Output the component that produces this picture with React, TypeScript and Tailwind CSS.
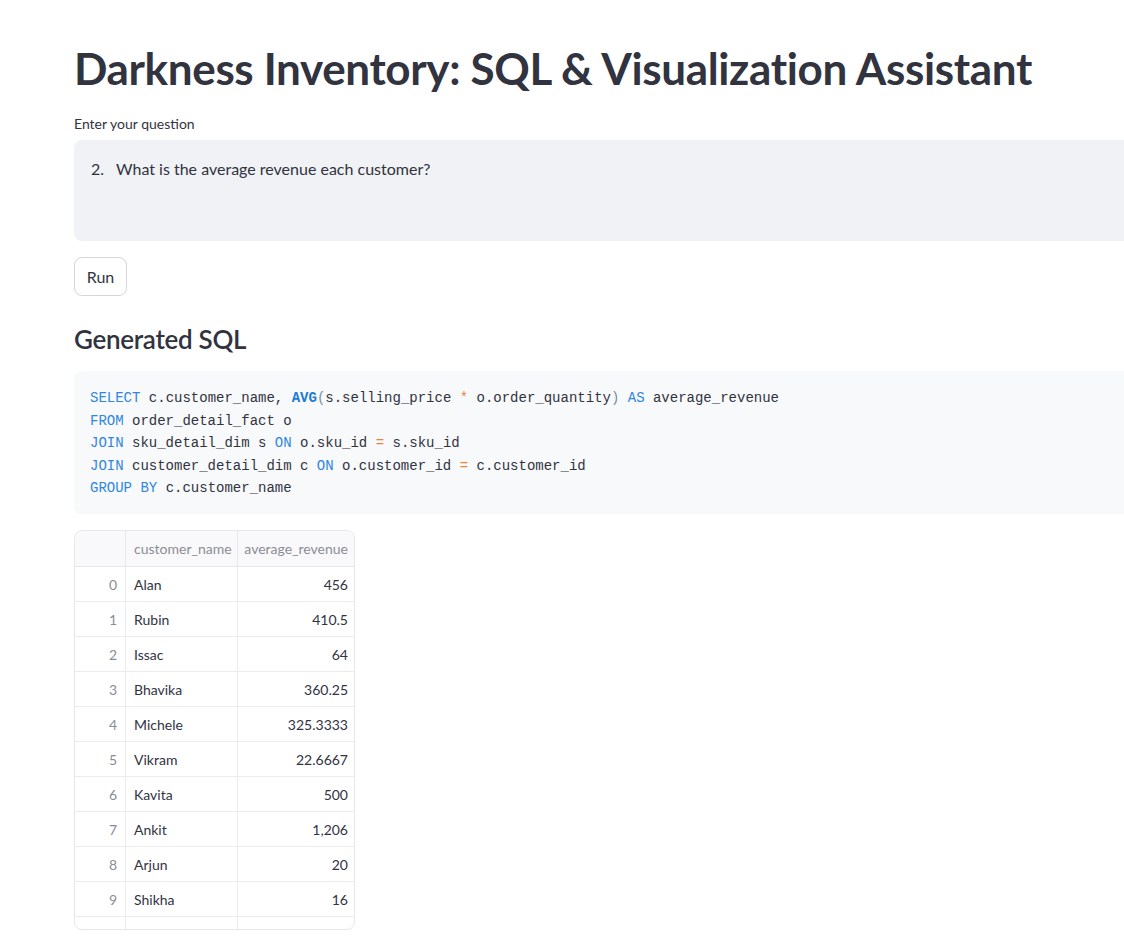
import React from 'react';

const rows: [number, string, string][] = [
  [0, 'Alan', '456'],
  [1, 'Rubin', '410.5'],
  [2, 'Issac', '64'],
  [3, 'Bhavika', '360.25'],
  [4, 'Michele', '325.3333'],
  [5, 'Vikram', '22.6667'],
  [6, 'Kavita', '500'],
  [7, 'Ankit', '1,206'],
  [8, 'Arjun', '20'],
  [9, 'Shikha', '16'],
  [10, '', ''],
];

const Kw = ({ children, bold }: { children: React.ReactNode; bold?: boolean }) => (
  <span className={bold ? 'text-[#1c7ad8] font-bold' : 'text-[#2f86e0]'}>{children}</span>
);
const Op = ({ children }: { children: React.ReactNode }) => (
  <span className="text-[#e8833a]">{children}</span>
);
const P = ({ children }: { children: React.ReactNode }) => (
  <span className="text-[#7d8da1]">{children}</span>
);

export default function App() {
  return (
    <div className="min-h-screen w-full overflow-hidden bg-white text-[#31333f] font-['Lato','Noto_Sans',sans-serif]">
      <div className="pl-[74px] w-[1200px] pt-[42px]">
        <h1 className="text-[44px] leading-[52px] font-bold tracking-[-0.35px] text-[#31333f]">
          Darkness Inventory: SQL &amp; Visualization Assistant
        </h1>

        <div className="mt-[21px] text-[14px] leading-[18px]">Enter your question</div>
        <div className="mt-[7px] h-[101px] rounded-l-[8px] bg-[#f0f2f6] px-[16px] pt-[18px] text-[16px] leading-[22px]">
          <span className="inline-block w-[26px] pl-[1px]">2.</span>
          What is the average revenue each customer?
        </div>

        <button className="mt-[16px] h-[39px] w-[53px] rounded-[8px] border border-[#d6d6d9] bg-white text-[16px] text-[#31333f]">
          Run
        </button>

        <h3 className="mt-[25px] text-[26px] leading-[36px] font-semibold tracking-[-0.3px]">Generated SQL</h3>

        <div className="mt-[14px] h-[143px] rounded-l-[8px] bg-[#f8f9fb] px-[16px] pt-[16px] font-['Liberation_Mono','DejaVu_Sans_Mono',monospace] text-[14px] leading-[22.5px] text-[#31333f] whitespace-pre">
          <div>
            <Kw>SELECT</Kw> c.customer_name, <Kw bold>AVG</Kw><P>(</P>s.selling_price <Op>*</Op> o.order_quantity<P>)</P> <Kw>AS</Kw> average_revenue
          </div>
          <div>
            <Kw>FROM</Kw> order_detail_fact o
          </div>
          <div>
            <Kw>JOIN</Kw> sku_detail_dim s <Kw>ON</Kw> o.sku_id <Op>=</Op> s.sku_id
          </div>
          <div>
            <Kw>JOIN</Kw> customer_detail_dim c <Kw>ON</Kw> o.customer_id <Op>=</Op> c.customer_id
          </div>
          <div>
            <Kw>GROUP</Kw> <Kw>BY</Kw> c.customer_name
          </div>
        </div>

        <div className="mt-[16px] h-[400px] w-[281px] overflow-hidden rounded-[8px] border border-[#e6e7ea] text-[14px]">
          <div className="grid h-[36px] grid-cols-[51px_112px_118px] border-b border-[#e6e7ea] bg-[#f9f9fb] text-[#8b8d95]">
            <div className="border-r border-[#e6e7ea]" />
            <div className="flex items-center border-r border-[#e6e7ea] px-[8px]">customer_name</div>
            <div className="flex items-center justify-end px-[8px]">average_revenue</div>
          </div>
          {rows.map(([i, name, rev]) => (
            <div key={i} className="grid h-[35px] grid-cols-[51px_112px_118px] border-b border-[#ececef]">
              <div className="flex items-center justify-end border-r border-[#ececef] px-[8px] text-[#8b8d95]">
                {name ? i : ''}
              </div>
              <div className="flex items-center border-r border-[#ececef] px-[8px]">{name}</div>
              <div className="flex items-center justify-end px-[8px]">{rev}</div>
            </div>
          ))}
        </div>
      </div>
    </div>
  );
}
